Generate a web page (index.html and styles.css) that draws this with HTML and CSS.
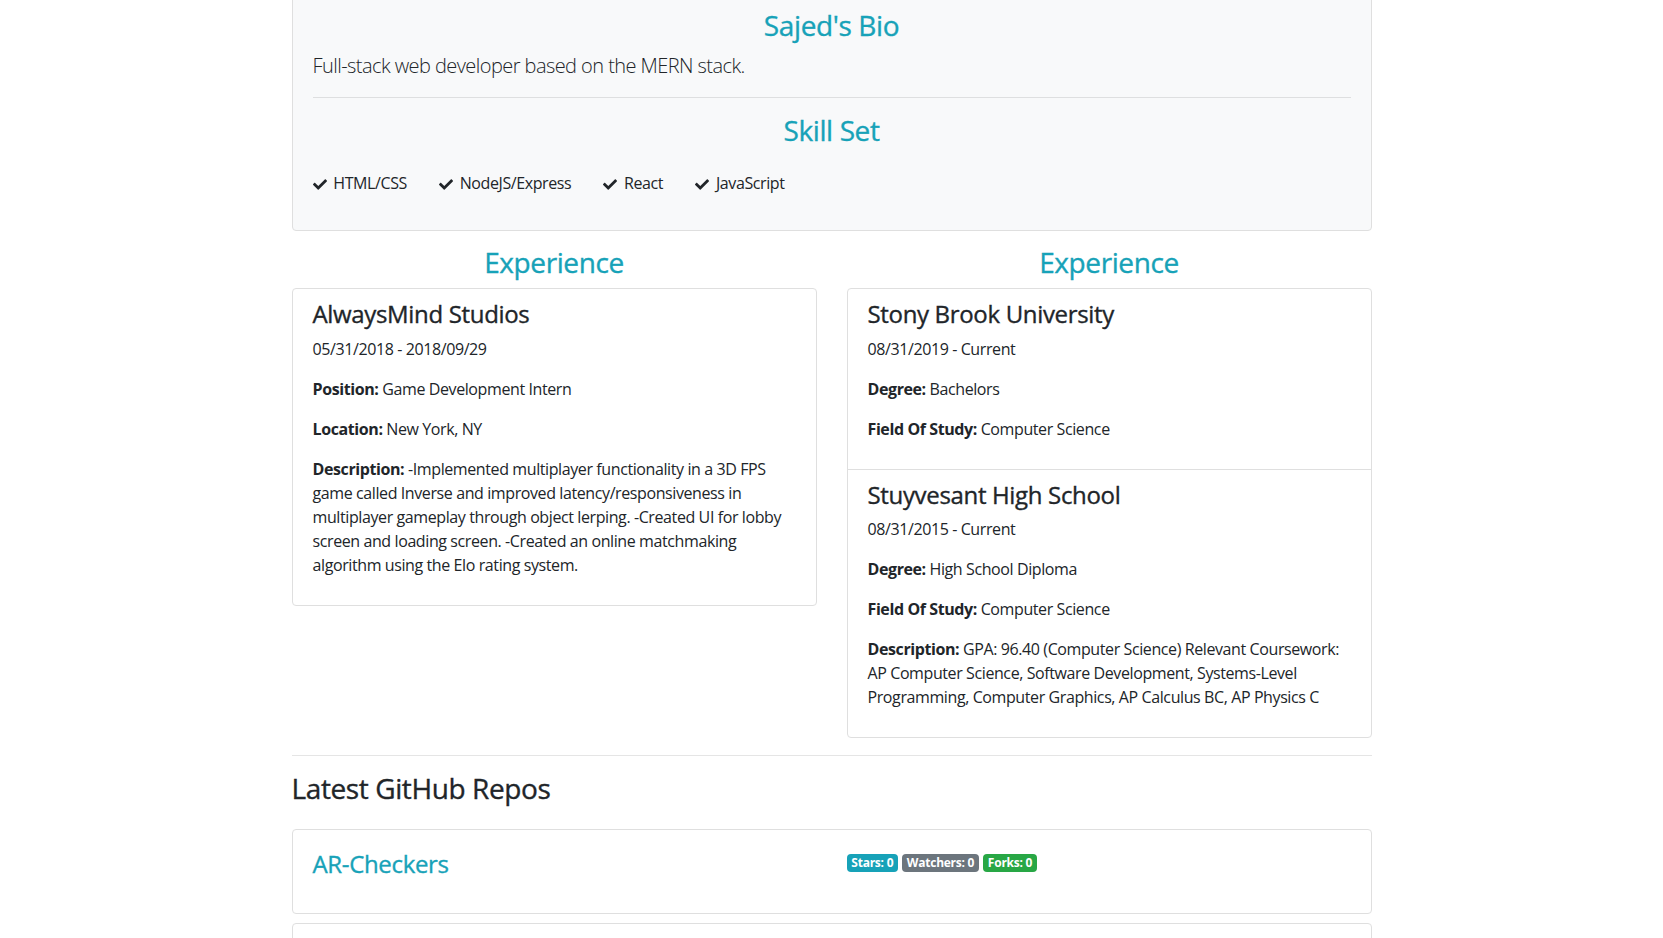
FILE: index.html
```html
<!DOCTYPE html>
<html lang="en">
<head>
<meta charset="utf-8">
<title>Sajed's Profile</title>
<link rel="stylesheet" href="styles.css">
</head>
<body>
<div class="container">
  <section class="card bio">
    <h3 class="info center">Sajed's Bio</h3>
    <p class="lead">Full-stack web developer based on the MERN stack.</p>
    <hr class="bio-rule">
    <h3 class="info center">Skill Set</h3>
    <div class="skills">
      <div class="skill"><svg class="check" viewBox="0 64 512 384" aria-hidden="true"><path d="M173.898 439.404l-166.4-166.4c-9.997-9.997-9.997-26.206 0-36.204l36.203-36.204c9.997-9.998 26.207-9.998 36.204 0L192 312.69 432.095 72.596c9.997-9.997 26.207-9.997 36.204 0l36.203 36.204c9.997 9.997 9.997 26.206 0 36.204l-294.4 294.401c-9.998 9.997-26.207 9.997-36.204-.001z"/></svg> HTML/CSS</div>
      <div class="skill"><svg class="check" viewBox="0 64 512 384" aria-hidden="true"><path d="M173.898 439.404l-166.4-166.4c-9.997-9.997-9.997-26.206 0-36.204l36.203-36.204c9.997-9.998 26.207-9.998 36.204 0L192 312.69 432.095 72.596c9.997-9.997 26.207-9.997 36.204 0l36.203 36.204c9.997 9.997 9.997 26.206 0 36.204l-294.4 294.401c-9.998 9.997-26.207 9.997-36.204-.001z"/></svg> NodeJS/Express</div>
      <div class="skill"><svg class="check" viewBox="0 64 512 384" aria-hidden="true"><path d="M173.898 439.404l-166.4-166.4c-9.997-9.997-9.997-26.206 0-36.204l36.203-36.204c9.997-9.998 26.207-9.998 36.204 0L192 312.69 432.095 72.596c9.997-9.997 26.207-9.997 36.204 0l36.203 36.204c9.997 9.997 9.997 26.206 0 36.204l-294.4 294.401c-9.998 9.997-26.207 9.997-36.204-.001z"/></svg> React</div>
      <div class="skill"><svg class="check" viewBox="0 64 512 384" aria-hidden="true"><path d="M173.898 439.404l-166.4-166.4c-9.997-9.997-9.997-26.206 0-36.204l36.203-36.204c9.997-9.998 26.207-9.998 36.204 0L192 312.69 432.095 72.596c9.997-9.997 26.207-9.997 36.204 0l36.203 36.204c9.997 9.997 9.997 26.206 0 36.204l-294.4 294.401c-9.998 9.997-26.207 9.997-36.204-.001z"/></svg> JavaScript</div>
    </div>
  </section>

  <div class="cols">
    <div class="col">
      <h3 class="info center">Experience</h3>
      <div class="card">
        <div class="entry">
          <h4>AlwaysMind Studios</h4>
          <p>05/31/2018 - 2018/09/29</p>
          <p><strong>Position:</strong> Game Development Intern</p>
          <p><strong>Location:</strong> New York, NY</p>
          <p><strong>Description:</strong> -Implemented multiplayer functionality in a 3D FPS game called Inverse and improved latency/responsiveness in multiplayer gameplay through object lerping. -Created UI for lobby screen and loading screen. -Created an online matchmaking algorithm using the Elo rating system.</p>
        </div>
      </div>
    </div>
    <div class="col">
      <h3 class="info center">Experience</h3>
      <div class="card">
        <div class="entry">
          <h4>Stony Brook University</h4>
          <p>08/31/2019 - Current</p>
          <p><strong>Degree:</strong> Bachelors</p>
          <p><strong>Field Of Study:</strong> Computer Science</p>
        </div>
        <div class="entry">
          <h4>Stuyvesant High School</h4>
          <p>08/31/2015 - Current</p>
          <p><strong>Degree:</strong> High School Diploma</p>
          <p><strong>Field Of Study:</strong> Computer Science</p>
          <p><strong>Description:</strong> GPA: 96.40 (Computer Science) Relevant Coursework: AP Computer Science, Software Development, Systems-Level Programming, Computer Graphics, AP Calculus BC, AP Physics C</p>
        </div>
      </div>
    </div>
  </div>

  <hr class="sep">
  <h3 class="repos-title">Latest GitHub Repos</h3>

  <div class="card repo">
    <div class="repo-row">
      <h4><a href="#">AR-Checkers</a></h4>
      <div class="badges">
        <span class="badge badge-info">Stars: 0</span>
        <span class="badge badge-secondary">Watchers: 0</span>
        <span class="badge badge-success">Forks: 0</span>
      </div>
    </div>
  </div>
  <div class="card repo">
    <div class="repo-row">
      <h4><a href="#">devconnector</a></h4>
      <div class="badges">
        <span class="badge badge-info">Stars: 0</span>
        <span class="badge badge-secondary">Watchers: 0</span>
        <span class="badge badge-success">Forks: 0</span>
      </div>
    </div>
  </div>
</div>
</body>
</html>
```

FILE: styles.css
```css
* {
  box-sizing: border-box;
}

html,
body {
  margin: 0;
  background: #fff;
}

body {
  font-family: "Open Sans", "Noto Sans", "Liberation Sans", sans-serif;
  font-size: 16px;
  line-height: 1.5;
  letter-spacing: -0.025em;
  color: #212529;
}

.container {
  width: 1080px;
  margin: 0 auto;
}

h3,
h4 {
  margin: 0 0 8px;
  font-weight: 500;
  line-height: 1.2;
  letter-spacing: -0.014em;
  -webkit-text-stroke: 0.35px currentColor;
}

h3 {
  font-size: 28px;
}

h4 {
  font-size: 24px;
}

p {
  margin: 0 0 16px;
}

strong {
  font-weight: 700;
}

.info {
  color: #17a2b8;
}

.center {
  text-align: center;
}

.card {
  background: #fff;
  border: 1px solid #dfdfdf;
  border-radius: 4px;
}

/* Bio */
.bio {
  background: #f8f9fa;
  padding: 20px 20px 19px;
  margin-top: -12px;
  margin-bottom: 15px;
}

.lead {
  font-size: 20px;
  font-weight: 300;
  letter-spacing: -0.028em;
}

.bio-rule {
  margin: 0 0 16px;
  border: 0;
  border-top: 1px solid rgba(0, 0, 0, 0.1);
}

.skills {
  display: flex;
  flex-wrap: wrap;
  margin: 0 -16px;
}

.skill {
  padding: 16px;
}

.check {
  width: 14px;
  height: 11px;
  margin-right: 3px;
  fill: #212529;
  vertical-align: -1px;
}

/* Experience / education */
.cols {
  display: flex;
  gap: 30px;
  align-items: flex-start;
}

.col {
  flex: 1 1 0;
  min-width: 0;
}

.entry {
  padding: 11px 20px 12px;
}

.entry + .entry {
  border-top: 1px solid #dfdfdf;
}

/* Repos */
.sep {
  margin: 17px 0 16px;
  border: 0;
  border-top: 1px solid rgba(0, 0, 0, 0.1);
}

.repos-title {
  margin-bottom: 23px;
}

.repo {
  padding: 20px;
  margin-bottom: 9px;
}

.repo-row {
  display: flex;
  gap: 30px;
  min-height: 43px;
}

.repo-row > * {
  flex: 1 1 0;
  min-width: 0;
}

.repo h4 {
  margin: 0;
}

.repo h4 a {
  color: #17a2b8;
  text-decoration: none;
}

.badges {
  display: flex;
  align-items: flex-start;
  gap: 4px;
  padding-top: 4px;
}

.badge {
  font-size: 12px;
  font-weight: 700;
  line-height: 1;
  letter-spacing: -0.02em;
  padding: 3px 4.8px;
  border-radius: 4px;
  color: #fff;
  white-space: nowrap;
}

.badge-info {
  background: #17a2b8;
}

.badge-secondary {
  background: #6c757d;
}

.badge-success {
  background: #28a745;
}
```
